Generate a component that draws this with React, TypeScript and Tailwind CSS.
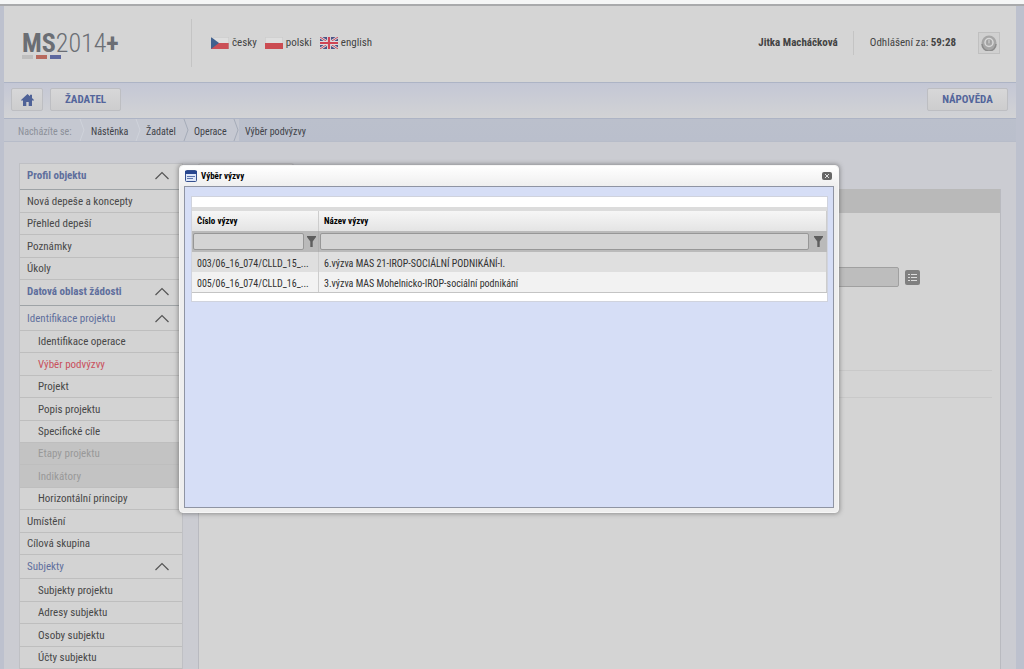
import React from "react";

type NavItem = { label: string; state?: "active" | "disabled" };

const profileItems: NavItem[] = [
  { label: "Nová depeše a koncepty" },
  { label: "Přehled depeší" },
  { label: "Poznámky" },
  { label: "Úkoly" },
];

const projectItems: NavItem[] = [
  { label: "Identifikace operace" },
  { label: "Výběr podvýzvy", state: "active" },
  { label: "Projekt" },
  { label: "Popis projektu" },
  { label: "Specifické cíle" },
  { label: "Etapy projektu", state: "disabled" },
  { label: "Indikátory", state: "disabled" },
  { label: "Horizontální principy" },
];

const areaItems: NavItem[] = [{ label: "Umístění" }, { label: "Cílová skupina" }];

const subjectItems: NavItem[] = [
  { label: "Subjekty projektu" },
  { label: "Adresy subjektu" },
  { label: "Osoby subjektu" },
  { label: "Účty subjektu" },
];

const calls = [
  { code: "003/06_16_074/CLLD_15_...", name: "6.výzva MAS 21-IROP-SOCIÁLNÍ PODNIKÁNÍ-I." },
  { code: "005/06_16_074/CLLD_16_...", name: "3.výzva MAS Mohelnicko-IROP-sociální podnikání" },
];

const itemColor = {
  normal: "text-[#484848]",
  active: "text-[#c9505c]",
  disabled: "bg-[#c3c3c3] text-[#999999]",
};

function NavList({ items, nested, height }: { items: NavItem[]; nested?: boolean; height: string }) {
  return (
    <ul className={`grid auto-rows-fr ${height}`}>
      {items.map((item) => (
        <li key={item.label} className={`flex border-b border-[#bebebe] ${itemColor[item.state ?? "normal"]}`}>
          <a href="#" className={`flex grow items-center pt-[2px] ${nested ? "pl-[18px]" : "pl-[7px]"}`}>
            {item.label}
          </a>
        </li>
      ))}
    </ul>
  );
}

function NavHeading({ label, className }: { label: string; className: string }) {
  return (
    <button type="button" className={`flex w-full items-center justify-between border-b pl-[7px] pr-3 text-[#5f6f9d] ${className}`}>
      <span className="pt-[2px]">{label}</span>
      <svg width="16" height="9" viewBox="0 0 16 9" fill="none" stroke="#555" strokeWidth="1.2" aria-hidden="true">
        <path d="M1.500 8 8 1.500 14.500 8" />
      </svg>
    </button>
  );
}

function CzechFlag() {
  return (
    <svg width="18" height="12" viewBox="0 0 18 12" aria-hidden="true">
      <path fill="#dedede" d="M0 0h18v6H0z" />
      <path fill="#cb5057" d="M0 6h18v6H0z" />
      <path fill="#41618f" d="m0 0 8 6-8 6z" />
      <path fill="none" stroke="#bdbdbd" strokeWidth=".5" d="M0 .25h17.750V12" />
    </svg>
  );
}

function PolishFlag() {
  return (
    <svg width="18" height="12" viewBox="0 0 18 12" aria-hidden="true">
      <path fill="#dedede" d="M0 0h18v6H0z" />
      <path fill="#cb4c52" d="M0 6h18v6H0z" />
      <path fill="none" stroke="#bdbdbd" strokeWidth=".5" d="M.25 6V.25h17.500V6" />
    </svg>
  );
}

function BritishFlag() {
  return (
    <svg width="18" height="12" viewBox="0 0 18 12" aria-hidden="true">
      <path fill="#4b5486" d="M0 0h18v12H0z" />
      <path stroke="#dcdce0" strokeWidth="2.600" d="m0 0 18 12M18 0 0 12" />
      <path stroke="#c8485a" strokeWidth="1" d="m0 0 18 12M18 0 0 12" />
      <path stroke="#dcdce0" strokeWidth="4" d="M9 0v12M0 6h18" />
      <path stroke="#cf4355" strokeWidth="2.200" d="M9 0v12M0 6h18" />
    </svg>
  );
}

function FunnelIcon() {
  return (
    <svg width="9" height="11" viewBox="0 0 9 11" fill="#5e5e5e" aria-hidden="true">
      <path d="M0 0h9v1L5.700 5.500V11H3.300V5.500L0 1z" />
    </svg>
  );
}

function Filter({ label }: { label: string }) {
  return (
    <div className="flex h-[21px] items-center">
      <input
        aria-label={label}
        className="ml-[1px] h-[17px] min-w-0 grow rounded-[2px] border border-[#979797] bg-[#d4d4d4] px-1 outline-none"
      />
      <button type="button" aria-label={`Filtr: ${label}`} className="flex w-[18px] justify-center">
        <FunnelIcon />
      </button>
    </div>
  );
}

function Header() {
  return (
    <header className="flex h-[76px] items-center bg-[#d5d5d5] pb-[3px] pl-[18px] pr-4 text-[11px] text-[#444444]">
      <a href="#" className="mt-1 flex w-[169px] flex-col text-[#6b6e74]" aria-label="MS2014+">
        <span className="text-[26px] leading-6">
          <b>MS</b>
          <span className="font-light">2014</span>
          <b>+</b>
        </span>
        <span className="flex gap-[3px]">
          <span className="h-1 w-[11px] bg-[#bebebe]" />
          <span className="h-1 w-[11px] bg-[#b86a5e]" />
          <span className="h-1 w-[11px] bg-[#5d689f]" />
        </span>
      </a>
      <nav className="flex h-12 items-center gap-2 border-l border-[#c4c4c4] pl-[19px]" aria-label="Jazyk">
        <a href="#" className="flex items-center gap-[3px]"><CzechFlag /><span className="pt-[2px]">česky</span></a>
        <a href="#" className="flex items-center gap-[3px]"><PolishFlag /><span className="pt-[2px]">polski</span></a>
        <a href="#" className="flex items-center gap-[3px]"><BritishFlag /><span className="pt-[2px]">english</span></a>
      </nav>
      <div className="ml-auto flex items-center">
        <b className="pr-[15px] pt-[2px]">Jitka Macháčková</b>
        <span className="flex h-6 items-center border-l border-[#c4c4c4] pl-4 pr-[22px] pt-[2px]">
          Odhlášení za:&nbsp;<b>59:28</b>
        </span>
        <button type="button" aria-label="Odhlásit" className="flex h-[22px] w-[22px] items-center justify-center border border-[#c0c0c0] bg-[#d0d0d0]">
          <svg width="16" height="16" viewBox="0 0 16 16" fill="none" aria-hidden="true">
            <circle cx="8" cy="8" r="7.500" fill="#a6a6a6" />
            <path d="M1 9a7 7 0 0 0 14 0" stroke="#8b8b8b" strokeWidth="1.500" />
            <circle cx="8" cy="7.500" r="4" stroke="#d8d8d8" strokeWidth="1.500" />
            <path d="M8 4.500v4" stroke="#8b8b8b" strokeWidth="2.500" />
            <path d="M8 4.500v4" stroke="#dedede" strokeWidth="1.200" />
          </svg>
        </button>
      </div>
    </header>
  );
}

function Toolbar() {
  const button =
    "flex h-[23px] items-center justify-center rounded-[2px] border border-[#bdbec2] bg-linear-to-b from-[#d7d7d8] to-[#cdcdce] font-bold text-[#53659b]";
  return (
    <nav className="flex h-[37px] items-center gap-[7px] border-y border-y-[#adb4c5] bg-linear-to-b from-[#c4c7d5] to-[#d2d3d5] pb-[2px] pl-[7px] pr-2 text-[11px]" aria-label="Hlavní">
      <button type="button" aria-label="Domů" className={`${button} w-8`}>
        <svg width="13" height="12" viewBox="0 0 13 12" fill="#4f6297" aria-hidden="true">
          <path d="M6.500 0 0 6l1 1 1-.9V12h3.300V8h2.400v4H11V6.100l1 .9 1-1-2-1.900V.8H9v1.500z" />
        </svg>
      </button>
      <button type="button" className={`${button} w-[71px] pt-[2px]`}>ŽADATEL</button>
      <button type="button" className={`${button} ml-auto w-[81px] pt-[2px]`}>NÁPOVĚDA</button>
    </nav>
  );
}

function Separator({ stroke }: { stroke: string }) {
  return (
    <svg className="shrink-0" width="6" height="22" viewBox="0 0 6 22" fill="none" stroke={stroke} aria-hidden="true">
      <path d="m1 0 4 11-4 11" />
    </svg>
  );
}

function Breadcrumbs() {
  return (
    <nav className="flex h-[23px] items-center border-b border-[#b7bcc9] bg-linear-to-b from-[#bbc0cc] to-[#babfcc] text-[10px] text-[#404248]" aria-label="Drobečková navigace">
      <div className="flex h-full items-center bg-[#c5c8d1]">
        <span className="w-[75px] pl-[14px] pt-[2px] text-[#8c9099]">Nacházíte se:</span>
        <Separator stroke="#cfd2da" />
        <a href="#" className="w-[50px] pl-[6px] pt-[2px]">Nástěnka</a>
        <Separator stroke="#cfd2da" />
        <a href="#" className="w-[42px] pl-[5px] pt-[2px]">Žadatel</a>
        <Separator stroke="#a5abb8" />
        <a href="#" className="w-[44px] pl-[5px] pt-[2px]">Operace</a>
        <Separator stroke="#a5abb8" />
      </div>
      <span className="pl-[6px] pt-[2px]">Výběr podvýzvy</span>
    </nav>
  );
}

function Sidebar() {
  return (
    <nav className="w-[164px] shrink-0 self-start border border-b-0 border-[#bfc0c4] bg-[#d3d3d3] text-[11px]" aria-label="Menu žádosti">
      <NavHeading label="Profil objektu" className="h-[26px] border-[#9ea3a6] pb-[3px] font-bold" />
      <NavList items={profileItems} height="h-[90px]" />
      <NavHeading label="Datová oblast žádosti" className="h-[26px] border-[#9ea3a6] pb-[3px] font-bold" />
      <NavHeading label="Identifikace projektu" className="h-[25px] border-[#bebebe]" />
      <NavList items={projectItems} nested height="h-[179px]" />
      <NavList items={areaItems} height="h-[45px]" />
      <NavHeading label="Subjekty" className="h-[24px] border-[#bebebe]" />
      <NavList items={subjectItems} nested height="h-[90px]" />
    </nav>
  );
}

function Content() {
  return (
    <main className="flex min-w-0 grow flex-col">
      <div className="h-[26px] w-[96px] rounded-t-[3px] border border-b-0 border-[#bbbbc0] bg-[#cfcfd1]" />
      <section className="grow border-x border-[#b9bac0] bg-[#d4d4d4]">
        <div className="h-6 bg-[#b9b9b9]" />
        <div className="mt-[54px] flex items-center gap-[6px] pl-4 pr-20">
          <input aria-label="Podvýzva" readOnly className="h-5 min-w-0 grow rounded-[2px] border border-[#a0a0a0] bg-[#bdbdbd]" />
          <button type="button" aria-label="Vybrat ze seznamu" className="flex h-[15px] w-[15px] items-center justify-center rounded-[2px] bg-[#808080]">
            <svg width="9" height="9" viewBox="0 0 9 9" fill="#dcdcdc" aria-hidden="true">
              <path d="M0 1h2v1H0zM3 1h6v1H3zM0 4h2v1H0zM3 4h6v1H3zM0 7h2v1H0zM3 7h6v1H3z" />
            </svg>
          </button>
        </div>
        <div className="mx-2 mt-[83px] h-7 border-y border-[#c9c9c9]" />
      </section>
    </main>
  );
}

function CallDialog() {
  const cell = "whitespace-nowrap border-r border-[#cdcdcd] pb-0 pl-[5px] pt-[2px] text-left";
  return (
    <div
      role="dialog"
      aria-labelledby="dialog-title"
      className="absolute left-[179px] top-[165px] flex h-[348px] w-[660px] flex-col rounded-[4px] border border-[#f6f6f6] bg-[#eeeeee] px-1 pb-1 shadow-[0_0_4px_1px_rgba(80,80,80,0.5)]"
    >
      <div className="-mx-1 flex h-[20px] shrink-0 items-center rounded-t-[4px] bg-linear-to-b from-white to-[#efefef] pl-[5px] pr-[6px]">
        <svg width="12" height="12" viewBox="0 0 12 12" aria-hidden="true">
          <rect x=".5" y=".5" width="11" height="11" rx="1" fill="#dde6f8" stroke="#35508f" />
          <path fill="#27468f" d="M0 1h12v3H0z" />
          <path fill="#5c75ae" d="M2 6h8v1H2zM2 8h6v1H2z" />
        </svg>
        <h2 id="dialog-title" className="pl-1 pt-[2px] text-[9px] font-bold text-black">Výběr výzvy</h2>
        <button type="button" aria-label="Zavřít" className="ml-auto flex h-2 w-[10px] items-center justify-center rounded-[2px] bg-[#666]">
          <svg width="6" height="6" viewBox="0 0 6 6" stroke="#e0e0e0" aria-hidden="true">
            <path d="m1 1 4 4M5 1 1 5" />
          </svg>
        </button>
      </div>
      <div className="grow border border-[#8f94a3] bg-[#d6def6] pl-[6px] pr-[5px] pt-[9px]">
        <div className="border border-[#d0d3dd] bg-white">
          <div className="h-[10px]" />
          <div className="h-1 bg-[#dcdcdc]" />
          <table className="w-full table-fixed border-separate border-spacing-0 text-[10px] text-[#303030]">
            <colgroup>
              <col className="w-[127px]" />
              <col />
            </colgroup>
            <thead>
              <tr className="h-[20px] bg-linear-to-b from-[#f6f6f6] to-[#e4e4e4] text-[9px] text-black">
                <th scope="col" className={cell}>Číslo výzvy</th>
                <th scope="col" className={cell}>Název výzvy</th>
              </tr>
              <tr className="bg-[#bababa]">
                <td className="border-r border-[#b0b0b0] p-0"><Filter label="Číslo výzvy" /></td>
                <td className="p-0"><Filter label="Název výzvy" /></td>
              </tr>
            </thead>
            <tbody>
              {calls.map((call) => (
                <tr key={call.code} className="h-5 odd:bg-[#dfdfdf] even:bg-[#f2f2f2]">
                  <td className={cell}>{call.code}</td>
                  <td className={cell}>{call.name}</td>
                </tr>
              ))}
            </tbody>
          </table>
          <div className="h-[9px] border-t border-[#c4c4c4]" />
        </div>
      </div>
    </div>
  );
}

export default function App() {
  return (
    <div className="relative flex h-screen flex-col overflow-hidden bg-[#bdc1ce] font-['Roboto_Condensed','Liberation_Sans_Narrow','Roboto',sans-serif]">
      <div className="h-[6px] shrink-0 border-b-2 border-[#a9aaac] bg-[#f5f6f6]" />
      <div className="ml-1 mr-2 flex min-h-0 grow flex-col bg-[#cbccd2]">
        <div className="shrink-0">
          <Header />
          <Toolbar />
          <Breadcrumbs />
        </div>
        <div className="flex min-h-0 grow gap-[15px] px-[15px] pt-[21px]">
          <Sidebar />
          <Content />
        </div>
      </div>
      <CallDialog />
    </div>
  );
}
